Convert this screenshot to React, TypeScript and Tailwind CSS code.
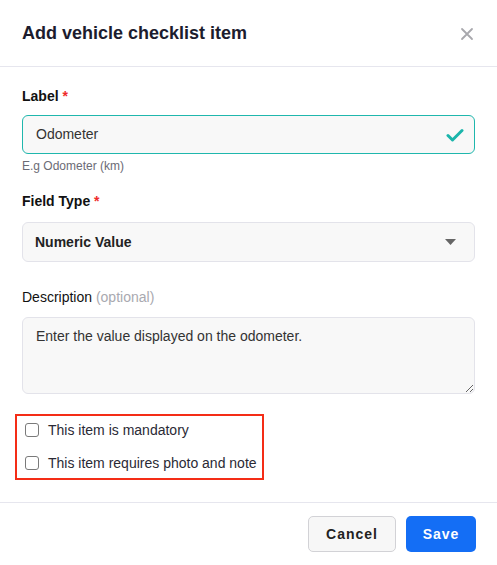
import React, { useState } from 'react';

function CloseIcon() {
  return (
    <svg width="14" height="14" viewBox="0 0 14 14" fill="none">
      <path d="M2 2L12 12M12 2L2 12" stroke="#a8a8ad" strokeWidth="1.8" strokeLinecap="round" />
    </svg>
  );
}

function CheckIcon() {
  return (
    <svg width="18" height="14" viewBox="0 0 18 14" fill="none">
      <path d="M2 7.5L6.5 12L16 2.5" stroke="#1bb5ab" strokeWidth="3" strokeLinecap="round" strokeLinejoin="round" />
    </svg>
  );
}

function Caret() {
  return (
    <svg width="11" height="6" viewBox="0 0 11 6">
      <path d="M0 0H11L5.5 6Z" fill="#666" />
    </svg>
  );
}

function Box({ checked, onChange, label }: { checked: boolean; onChange: () => void; label: string }) {
  return (
    <label className="flex items-center gap-[9px] cursor-pointer">
      <input
        type="checkbox"
        checked={checked}
        onChange={onChange}
        className="appearance-none w-[14px] h-[14px] border-[1.5px] border-[#7a7a7a] rounded-[3px] bg-white checked:bg-[#146ef5] checked:border-[#146ef5]"
      />
      <span className="text-[14px] leading-[20px] text-[#2a2a35]">{label}</span>
    </label>
  );
}

export default function App() {
  const [mandatory, setMandatory] = useState(false);
  const [photo, setPhoto] = useState(false);

  return (
    <div className="w-[497px] h-[565px] bg-white flex flex-col font-['Liberation_Sans',Arial,sans-serif]">
      {/* Header */}
      <div className="h-[67px] flex items-center justify-between px-[22px] border-b border-[#e6e6ee]">
        <h1 className="text-[18px] font-bold text-[#1c1c2e]">Add vehicle checklist item</h1>
        <button className="mr-[1px] mt-[2px]">
          <CloseIcon />
        </button>
      </div>

      {/* Body */}
      <div className="flex-1 px-[22px] pt-[19px]">
        <div className="text-[14px] font-bold text-[#111] leading-[20px]">
          Label <span className="text-[#ef2b2b]">*</span>
        </div>
        <div className="mt-[9px] h-[39px] flex items-center justify-between rounded-[6px] border border-[#1fb7ad] bg-[#f8f8f8] pl-[13px] pr-[10px]">
          <span className="text-[14px] text-[#333]">Odometer</span>
          <CheckIcon />
        </div>
        <div className="mt-[4px] text-[12px] leading-[16px] text-[#6b6b75]">E.g Odometer (km)</div>

        <div className="mt-[17px] text-[14px] font-bold text-[#111] leading-[20px]">
          Field Type <span className="text-[#ef2b2b]">*</span>
        </div>
        <div className="mt-[11px] h-[40px] flex items-center justify-between rounded-[6px] border border-[#e3e3ea] bg-[#f8f8f8] pl-[12px] pr-[18px]">
          <span className="text-[14px] font-bold text-[#222]">Numeric Value</span>
          <Caret />
        </div>

        <div className="mt-[25px] text-[14px] leading-[20px] text-[#111]">
          Description <span className="text-[#a9a9b0]">(optional)</span>
        </div>
        <textarea
          readOnly
          value="Enter the value displayed on the odometer."
          className="mt-[10px] block w-full h-[77px] rounded-[6px] border border-[#e3e3ea] bg-[#f8f8f8] px-[13px] py-[8px] text-[14px] leading-[20px] text-[#333] outline-none resize-y"
        />

        <div className="mt-[20px] ml-[-7px] w-[249px] border-2 border-[#f42d17] pl-[8px] pt-[4px] pb-[5px] flex flex-col gap-[13px]">
          <Box checked={mandatory} onChange={() => setMandatory(!mandatory)} label="This item is mandatory" />
          <Box checked={photo} onChange={() => setPhoto(!photo)} label="This item requires photo and note" />
        </div>
      </div>

      {/* Footer */}
      <div className="h-[63px] border-t border-[#e6e6ee] flex items-center justify-end gap-[10px] px-[21px]">
        <button className="h-[36px] w-[88px] rounded-[5px] border border-[#d2d2d6] bg-[#f7f7f7] text-[14px] font-bold tracking-[1px] text-[#222]">
          Cancel
        </button>
        <button className="h-[36px] w-[70px] rounded-[5px] bg-[#146ef5] text-[14px] font-bold tracking-[1px] text-white">
          Save
        </button>
      </div>
    </div>
  );
}
